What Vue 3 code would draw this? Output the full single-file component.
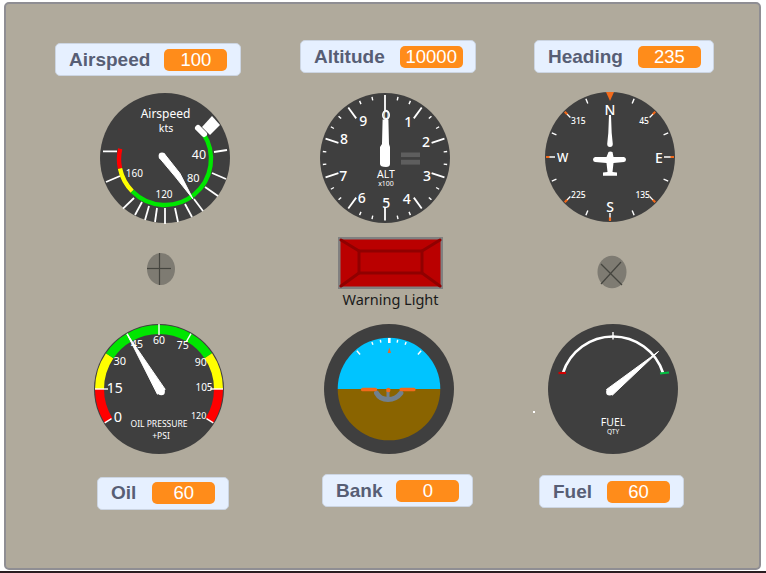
<script setup>
const polar = (a, r, cx = 0, cy = 0) => {
  const t = (a * Math.PI) / 180
  return [+(cx + r * Math.sin(t)).toFixed(2), +(cy - r * Math.cos(t)).toFixed(2)]
}
const arc = (a1, a2, r, cx = 0, cy = 0) => {
  const [x1, y1] = polar(a1, r, cx, cy)
  const [x2, y2] = polar(a2, r, cx, cy)
  const large = Math.abs(a2 - a1) > 180 ? 1 : 0
  const sweep = a2 > a1 ? 1 : 0
  return `M${x1} ${y1}A${r} ${r} 0 ${large} ${sweep} ${x2} ${y2}`
}

const speedTicks = [
  [-62, -6.7, -48, -6.7], [-59, 24, -45, 18], [-42, 50.7, -31, 40], [-30, 57, -23, 44],
  [-20, 62, -16, 48], [-10, 64, -8, 50], [0, 66, 0, 50], [13, 64, 10, 50],
  [27, 59, 20, 46], [38, 53, 29, 41], [53, 38, 40, 29], [61, 21, 47, 15], [62, -8, 49, -6]
]
const speedLabels = [
  { t: '40', x: 34, y: -3.7, s: 12.5 },
  { t: '80', x: 28.3, y: 19.3, s: 11 },
  { t: '120', x: -1, y: 35.7, s: 10 },
  { t: '160', x: -30.7, y: 15, s: 10 }
]

// two small marks between each pair of numbers
const altMinor = []
for (let i = 0; i < 30; i++) {
  if (i % 3) altMinor.push(polar(i * 12, 62.5).concat(polar(i * 12, 59)))
}
const altMajor = []
for (let i = 1; i < 10; i++) altMajor.push(polar(i * 36, 62.5).concat(polar(i * 36, 49)))
const altLabels = [
  ['1', 23.3, -37], ['2', 41, -16.7], ['3', 42, 17.3], ['4', 21.7, 40.7], ['5', 1.3, 44.7],
  ['6', -23.3, 39], ['7', -41.7, 17.3], ['8', -41, -20], ['9', -21.7, -37.7]
]

const hdgMinor = [22.5, 67.5, 112.5, 157.5, 202.5, 247.5, 292.5, 337.5].map(a => polar(a, 63).concat(polar(a, 58)))
const hdgMajor = [45, 135, 225, 315].map(a => polar(a, 61).concat(polar(a, 56)))
const hdgTips = [45, 90, 135, 180, 225, 270, 315].map(a => polar(a, 64).concat(polar(a, 60.5)))
const hdgLabels = [
  { t: 'N', x: 0, y: -48, s: 14 }, { t: 'S', x: 0, y: 49.5, s: 14 },
  { t: 'W', x: -47.3, y: 0, s: 12 }, { t: 'E', x: 49, y: 0, s: 14 },
  { t: '315', x: -31.7, y: -36.7, s: 8.5 }, { t: '45', x: 34, y: -36.7, s: 8.5 },
  { t: '225', x: -31.7, y: 37, s: 8.5 }, { t: '135', x: 32.7, y: 37, s: 8.5 }
]

const oilBands = [
  { c: '#ff0000', d: arc(-122, -90, 59.5) },
  { c: '#ffff00', d: arc(-90, -56, 59.5) },
  { c: '#00e600', d: arc(-56, 56, 59.5) },
  { c: '#ffff00', d: arc(56, 90, 59.5) },
  { c: '#ff0000', d: arc(90, 122, 59.5) }
]
const oilTicks = [
  polar(-90, 64).concat(polar(-90, 51)), polar(90, 64).concat(polar(90, 51)),
  polar(0, 65).concat(polar(0, 54)), polar(30, 64).concat(polar(30, 55)),
  polar(-30, 64).concat(polar(-30, 55)),
  polar(-122, 64).concat(polar(-122, 56)), polar(122, 64).concat(polar(122, 56))
]
const oilLabels = [
  { t: '0', x: -41, y: 27, s: 14.5 }, { t: '15', x: -44.3, y: -1.7, s: 14 },
  { t: '30', x: -39.3, y: -29, s: 11 }, { t: '45', x: -22, y: -44.7, s: 10.5 },
  { t: '60', x: 0, y: -48.7, s: 10.5 }, { t: '75', x: 23.7, y: -44, s: 10.5 },
  { t: '90', x: 41.7, y: -27.3, s: 10.5 }, { t: '105', x: 45, y: -1.7, s: 10 },
  { t: '120', x: 39.7, y: 26, s: 9 }
]

const bankTicks = [-40, -20, -10, 10, 20, 40].map(a => polar(a, 50).concat(polar(a, a % 40 ? 47 : 45)))
</script>

<template>
  <div class="stage">
    <div class="col col-one">
      <div class="monitor speed-mon">
        <span class="mon-label">Airspeed</span>
        <span class="mon-value">100</span>
      </div>
      <svg class="gauge speed-g" viewBox="-66 -66 132 132">
        <circle r="65" class="face" />
        <line v-for="(t, i) in speedTicks" :key="i" :x1="t[0]" :y1="t[1]" :x2="t[2]" :y2="t[3]" class="tick" />
        <path :d="arc(-77, -102, 46, 0, 1)" class="band" stroke="#ff0000" />
        <path :d="arc(-102, -134.6, 46, 0, 1)" class="band" stroke="#ffff00" />
        <path :d="arc(-134.6, -304, 46, 0, 1)" class="band" stroke="#00e600" />
        <line x1="33" y1="-30" x2="39" y2="-24" class="cap" />
        <polygon points="37,-31 47,-42 55,-33 45,-23" fill="#fff" />
        <text x="0.5" y="-45" class="gtext" font-size="12">Airspeed</text>
        <text x="1" y="-30" class="gtext" font-size="10.5">kts</text>
        <text v-for="l in speedLabels" :key="l.t" :x="l.x" :y="l.y" class="gtext" :font-size="l.s">{{ l.t }}</text>
        <circle cx="-3" cy="-2" r="3.4" fill="#fff" />
        <polygon points="-5.6,-0.2 -0.6,-4.2 15,15.5 28,41 10.5,19" class="needle" />
      </svg>
      <svg class="knob knob-a" viewBox="0 0 30 34">
        <ellipse cx="15" cy="17" rx="14" ry="16" class="knob-face" />
        <line x1="13.5" y1="1" x2="13.5" y2="33" class="knob-line" />
        <line x1="1" y1="16.5" x2="25" y2="16.5" class="knob-line" />
      </svg>
      <svg class="gauge oil-g" viewBox="-66 -66 132 132">
        <circle r="65" class="face" />
        <path v-for="(b, i) in oilBands" :key="i" :d="b.d" class="oil-band" :stroke="b.c" />
        <line v-for="(t, i) in oilTicks" :key="i" :x1="t[0]" :y1="t[1]" :x2="t[2]" :y2="t[3]" class="tick thin" />
        <text v-for="l in oilLabels" :key="l.t" :x="l.x" :y="l.y" class="gtext" :font-size="l.s">{{ l.t }}</text>
        <text x="0" y="34.7" class="gtext" font-size="8.5">OIL PRESSURE</text>
        <text x="2" y="46" class="gtext" font-size="8.5">+PSI</text>
        <polygon points="-1.6,5.2 6.2,0.4 -32,-55" class="needle" />
        <circle cx="2.3" cy="2.7" r="3.6" fill="#fff" />
      </svg>
      <div class="monitor oil-mon">
        <span class="mon-label">Oil</span>
        <span class="mon-value">60</span>
      </div>
    </div>

    <div class="col col-two">
      <div class="monitor alt-mon">
        <span class="mon-label">Altitude</span>
        <span class="mon-value">10000</span>
      </div>
      <svg class="gauge alt-g" viewBox="-66 -66 132 132">
        <circle r="65" class="face" />
        <line v-for="(t, i) in altMinor" :key="i" :x1="t[0]" :y1="t[1]" :x2="t[2]" :y2="t[3]" class="tick thin" />
        <line v-for="(t, i) in altMajor" :key="'m' + i" :x1="t[0]" :y1="t[1]" :x2="t[2]" :y2="t[3]" class="tick" />
        <text v-for="l in altLabels" :key="l[0]" :x="l[1]" :y="l[2]" class="gtext medium" font-size="14">{{ l[0] }}</text>
        <text x="1" y="15.5" class="gtext" font-size="10.5">ALT</text>
        <text x="1" y="25" class="gtext" font-size="7">x100</text>
        <rect x="16" y="-5.5" width="19" height="4.6" fill="#5e5e5e" />
        <rect x="16" y="1.8" width="19" height="4.8" fill="#5e5e5e" />
        <text x="1" y="-43" class="gtext" font-size="10">0</text>
        <line x1="0" y1="-63" x2="0" y2="-47" class="tick" />
        <ellipse cx="1" cy="-43" rx="3.2" ry="4.4" fill="none" stroke="#fff" stroke-width="1.6" />
        <path d="M-2.4 -38.5H3.4L4 -14L5 -11V6Q5 9 1 9Q-5 9 -5 6V-11L-3 -14Z" fill="#fff" />
      </svg>
      <div class="warning">
        <svg class="lamp" viewBox="0 0 105 52">
          <rect width="105" height="52" fill="#808080" />
          <rect x="2.5" y="2.5" width="100" height="47" fill="#ba0000" />
          <rect x="21" y="14" width="63" height="22" fill="#ba0000" stroke="#900000" stroke-width="3" />
          <path d="M3 3L21 14M102 3L84 14M3 49L21 36M102 49L84 36" stroke="#900000" stroke-width="3" stroke-linecap="round" />
        </svg>
        <div class="warning-text">Warning Light</div>
      </div>
      <svg class="gauge bank-g" viewBox="-66 -66 132 132">
        <circle r="65" class="face" />
        <path d="M-51.3 0A51.3 51.3 0 0 1 51.3 0Z" fill="#00c4ff" />
        <path d="M-51.3 0A51.3 51.3 0 0 0 51.3 0Z" fill="#8a6400" />
        <line v-for="(t, i) in bankTicks" :key="i" :x1="t[0]" :y1="t[1]" :x2="t[2]" :y2="t[3]" class="tick thin" />
        <rect x="-1" y="-51" width="2.6" height="5" fill="#fff" />
        <polygon points="0.3,-41.5 -1.3,-36 2,-36" fill="#e3692a" />
        <path d="M-12.5 4Q-9 10.5 -1 10.5Q7 10.5 12 4" fill="none" stroke="#71808f" stroke-width="5" stroke-linecap="round" />
        <path d="M-1 2V8" stroke="#71808f" stroke-width="3" />
        <rect x="-28" y="-1.2" width="16" height="3.4" rx="1.5" fill="#f26a1b" />
        <rect x="10.5" y="-1.2" width="16" height="3.4" rx="1.5" fill="#f26a1b" />
        <circle cx="-0.7" cy="1" r="2.2" fill="#f26a1b" />
      </svg>
      <div class="monitor bank-mon">
        <span class="mon-label">Bank</span>
        <span class="mon-value">0</span>
      </div>
    </div>

    <div class="col col-three">
      <div class="monitor hdg-mon">
        <span class="mon-label">Heading</span>
        <span class="mon-value">235</span>
      </div>
      <svg class="gauge hdg-g" viewBox="-66 -66 132 132">
        <circle r="65" class="face" />
        <line v-for="(t, i) in hdgMinor" :key="i" :x1="t[0]" :y1="t[1]" :x2="t[2]" :y2="t[3]" class="tick thin" />
        <line v-for="(t, i) in hdgMajor" :key="'m' + i" :x1="t[0]" :y1="t[1]" :x2="t[2]" :y2="t[3]" class="tick thin" />
        <line x1="54" y1="0" x2="62" y2="0" class="tick thin" />
        <line x1="-62" y1="0" x2="-55" y2="0" class="tick thin" />
        <line x1="0" y1="56" x2="0" y2="62" class="tick thin" />
        <line v-for="(t, i) in hdgTips" :key="'t' + i" :x1="t[0]" :y1="t[1]" :x2="t[2]" :y2="t[3]" class="tip" />
        <polygon points="-4,-65 4,-65 0,-56" fill="#f26a1b" />
        <text v-for="l in hdgLabels" :key="l.t" :x="l.x" :y="l.y" class="gtext medium" :font-size="l.s">{{ l.t }}</text>
        <path d="M-1 -42H1L1.7 -24L2.8 -13Q2.8 -10 0 -10Q-2.8 -10 -2.8 -13L-1.7 -24Z" fill="#fff" />
        <path d="M-1.5 -5Q-0.5 -5.5 0 -5.5Q1.5 -5.5 2.5 -5L3.5 0H14Q16 0.5 16 2.5Q16 4.7 14 5L3.5 6L2.5 15L7 15.5V18.7H-7V15.5L-2.5 15L-3.5 6L-15 5Q-17 4.5 -17 2.5Q-17 0.5 -15 0L-3.5 0Z" fill="#fff" />
      </svg>
      <svg class="knob knob-b" viewBox="0 0 30 34">
        <ellipse cx="15" cy="17" rx="14.5" ry="16.3" class="knob-face" />
        <line x1="4" y1="9" x2="25" y2="30" class="knob-line" />
        <line x1="24" y1="7" x2="4" y2="29" class="knob-line" />
      </svg>
      <svg class="gauge fuel-g" viewBox="-66 -66 132 132">
        <circle r="65" class="face" />
        <path :d="arc(-72, 72, 52.5)" fill="none" stroke="#fff" stroke-width="2.7" />
        <line x1="0" y1="-57" x2="0" y2="-49.5" class="tick thin" />
        <line x1="-54.5" y1="-16" x2="-47" y2="-16" stroke="#d00000" stroke-width="2.2" />
        <line x1="47" y1="-15.5" x2="56" y2="-16.5" stroke="#00c040" stroke-width="2.2" />
        <polygon points="-6.5,0.5 -0.5,6 45.5,-37.5" class="needle" />
        <circle cx="-3.3" cy="3" r="3.6" fill="#fff" />
        <text x="0" y="33" class="gtext" font-size="10.5">FUEL</text>
        <text x="0" y="42.5" class="gtext" font-size="6.5">QTY</text>
      </svg>
      <div class="monitor fuel-mon">
        <span class="mon-label">Fuel</span>
        <span class="mon-value">60</span>
      </div>
    </div>
    <i class="speck"></i>
  </div>
</template>

<style scoped>
.stage {
  position: relative;
  box-sizing: border-box;
  width: 757px;
  height: 568px;
  margin: 2px 0 0 4px;
  border: 2px solid #8f8e93;
  border-radius: 5px;
  background: #b0aa9c;
  display: grid;
  grid-template-columns: 235px 240px 1fr;
  overflow: hidden;
}
.col {
  display: flex;
  flex-direction: column;
  align-items: flex-start;
}
.monitor {
  box-sizing: border-box;
  height: 33px;
  padding: 0 12.5px 0 13px;
  display: flex;
  align-items: center;
  gap: 15px;
  background: #e6f0ff;
  border: 1px solid #ccd5e2;
  border-radius: 5px;
  font-family: "Liberation Sans", Arial, sans-serif;
}
.mon-label {
  font-size: 19px;
  font-weight: 700;
  color: #575e75;
}
.mon-value {
  width: 63px;
  height: 22px;
  line-height: 22px;
  text-align: center;
  border-radius: 5px;
  background: #ff8c1a;
  color: #fff;
  font-size: 18.5px;
}
.gauge {
  display: block;
  width: 132px;
  height: 132px;
  flex: none;
}
.knob {
  display: block;
  width: 30px;
  height: 34px;
  flex: none;
}
.face { fill: #3f3f3f; }
.tick { stroke: #fff; stroke-width: 1.8; }
.tick.thin { stroke-width: 1.4; }
.tip { stroke: #f26a1b; stroke-width: 2.2; }
.band { fill: none; stroke-width: 4.4; }
.cap { stroke: #fff; stroke-width: 6; stroke-linecap: round; }
.oil-band { fill: none; stroke-width: 9; }
.needle {
  fill: #fff;
  stroke: #fff;
  stroke-width: 1;
  stroke-linejoin: round;
}
.gtext {
  fill: #fff;
  font-family: "Noto Sans", "Open Sans", sans-serif;
  text-anchor: middle;
  dominant-baseline: central;
}
.medium { font-weight: 500; }
.knob-face { fill: #7e7b72; }
.knob-line { stroke: #45453f; stroke-width: 1.2; }
.warning {
  display: flex;
  flex-direction: column;
  align-items: center;
  width: 105px;
}
.lamp {
  display: block;
  width: 105px;
  height: 52px;
}
.warning-text {
  height: 21px;
  white-space: nowrap;
  font-family: "Noto Sans", "Open Sans", sans-serif;
  font-size: 14.5px;
  line-height: 20px;
  color: #1a1a1a;
}
.speck {
  position: absolute;
  left: 527px;
  top: 407px;
  width: 1.5px;
  height: 1.5px;
  background: #fff;
}
.speed-mon { margin: 39px 0 0 49px; gap: 14px; }
.speed-g { margin: 16px 0 0 93px; }
.knob-a { margin: 28px 0 0 140px; }
.oil-g { margin: 37px 0 0 87px; }
.oil-mon { margin: 21.5px 0 0 91px; gap: 16px; }
.alt-mon { margin: 36px 0 0 59px; }
.alt-g { margin: 19px 0 0 78px; }
.warning { margin: 13px 0 0 97px; }
.bank-g { margin: 13px 0 0 82px; }
.bank-mon { margin: 19px 0 0 81px; gap: 14px; }
.hdg-mon { margin: 36px 0 0 53px; }
.hdg-g { margin: 18px 0 0 63px; }
.knob-b { margin: 32px 0 0 116px; }
.fuel-g { margin: 34px 0 0 66px; }
.fuel-mon { margin: 20px 0 0 58px; }
</style>

<style>
html, body { background: #fff; }
body { height: 573px; overflow: hidden; position: relative; }
body::after {
  content: "";
  position: absolute;
  left: 0;
  right: 0;
  top: 571px;
  height: 2px;
  background: #2a1c20;
}
</style>
